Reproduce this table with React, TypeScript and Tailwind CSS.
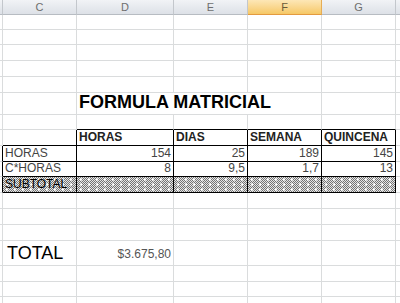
import * as React from "react"

// column widths incl. right gridline: row-header sliver, C, D, E, F, G, H sliver
const COLS = [3, 74, 97, 74, 74, 74, 10]
const LETTERS = ["", "C", "D", "E", "F", "G", ""]

// row heights incl. bottom gridline, first body row onward
const ROWS = [15, 15, 16, 16, 16, 22, 15, 16, 16, 15, 16, 16, 16, 16, 25, 16, 15, 16]

type CellSpec = {
  text?: React.ReactNode
  span?: number
  align?: "left" | "right"
  className?: string
  right?: boolean // black right edge
  bottom?: boolean // black bottom edge
  fill?: boolean
}

const font = "font-['Liberation_Sans',Arial,sans-serif]"

const subtotalFill =
  "bg-[#b4b4b4] bg-[image:radial-gradient(circle,#ffffff_0.9px,transparent_1.4px),repeating-conic-gradient(#747474_0_25%,#e6e6e6_0_50%)] bg-[length:8px_5px,2px_2px]"

function HeaderRow() {
  return (
    <div className="flex h-[15px]">
      {COLS.map((w, i) => {
        const active = LETTERS[i] === "F"
        return (
          <div
            key={i}
            style={{ width: w }}
            className={
              "shrink-0 flex items-center justify-center border-r border-b text-[11px] leading-none " +
              font +
              (active
                ? " bg-gradient-to-b from-[#fde7b6] to-[#f6c865] border-r-[#e6ad55] border-b-[#e39a3f] text-[#6a5a3a]"
                : " bg-gradient-to-b from-[#f1f3f6] to-[#dde1e7] border-r-[#c3c7cc] border-b-[#b7bcc2] text-[#6e6e6e]")
            }
          >
            {LETTERS[i]}
          </div>
        )
      })}
    </div>
  )
}

function Row({ h, cells }: { h: number; cells: CellSpec[] }) {
  return (
    <div className="flex" style={{ height: h }}>
      {cells.map((c, i) => {
        const span = c.span ?? 1
        let idx = 0
        for (let k = 0; k < i; k++) idx += cells[k].span ?? 1
        const w = COLS.slice(idx, idx + span).reduce((a, b) => a + b, 0)
        return (
          <div
            key={i}
            style={{ width: w }}
            className={
              "shrink-0 flex items-end overflow-visible whitespace-nowrap border-r border-b pb-[1px] " +
              font +
              (c.right ? " border-r-black" : " border-r-[#dadcdd]") +
              (c.bottom ? " border-b-black" : " border-b-[#dadcdd]") +
              (c.align === "right" ? " justify-end pr-[2px]" : " pl-[2px]") +
              (c.fill ? " " + subtotalFill : " bg-white") +
              (c.className ? " " + c.className : "")
            }
          >
            {c.text}
          </div>
        )
      })}
    </div>
  )
}

const blank = (): CellSpec[] => COLS.map(() => ({}))

export default function App() {
  const body: CellSpec[][] = ROWS.map(() => blank())

  // title spans D:F
  body[5] = [
    {},
    {},
    {
      span: 3,
      text: "FORMULA MATRICIAL",
      className: "text-[18px] font-bold text-black leading-none pb-[3px] pl-[1px]",
    },
    {},
    {},
  ]

  // top edge of the table header
  body[6] = [{}, {}, { bottom: true }, { bottom: true }, { bottom: true }, { bottom: true }, {}]

  const hdr = "text-[12px] font-bold text-[#222] leading-none pb-[2px]"
  body[7] = [
    {},
    { right: true, bottom: true },
    { right: true, bottom: true, text: "HORAS", className: hdr },
    { right: true, bottom: true, text: "DIAS", className: hdr },
    { right: true, bottom: true, text: "SEMANA", className: hdr },
    { right: true, bottom: true, text: "QUINCENA", className: hdr },
    {},
  ]

  const txt = "text-[12px] text-[#444] leading-none pb-[2px]"
  const dataRow = (label: string, vals: string[]): CellSpec[] => [
    { right: true },
    { right: true, bottom: true, text: label, className: txt },
    ...vals.map((v) => ({ right: true, bottom: true, text: v, align: "right" as const, className: txt })),
    {},
  ]
  body[8] = dataRow("HORAS", ["154", "25", "189", "145"])
  body[9] = dataRow("C*HORAS", ["8", "9,5", "1,7", "13"])
  body[10] = [
    { right: true },
    { right: true, bottom: true, fill: true, text: "SUBTOTAL", className: txt + " text-black" },
    { right: true, bottom: true, fill: true },
    { right: true, bottom: true, fill: true },
    { right: true, bottom: true, fill: true },
    { right: true, bottom: true, fill: true },
    {},
  ]

  body[14] = [
    {},
    { text: "TOTAL", className: "text-[18px] text-black leading-none pb-[3px] pl-[4px]" },
    { text: "$3.675,80", align: "right", className: "text-[12px] text-[#555] leading-none pb-[5px]" },
    {},
    {},
    {},
    {},
  ]

  return (
    <div className="w-[400px] h-[303px] overflow-hidden bg-white">
      <div className="w-[406px]">
        <HeaderRow />
        {ROWS.map((h, r) => (
          <Row key={r} h={h} cells={body[r]} />
        ))}
      </div>
    </div>
  )
}
